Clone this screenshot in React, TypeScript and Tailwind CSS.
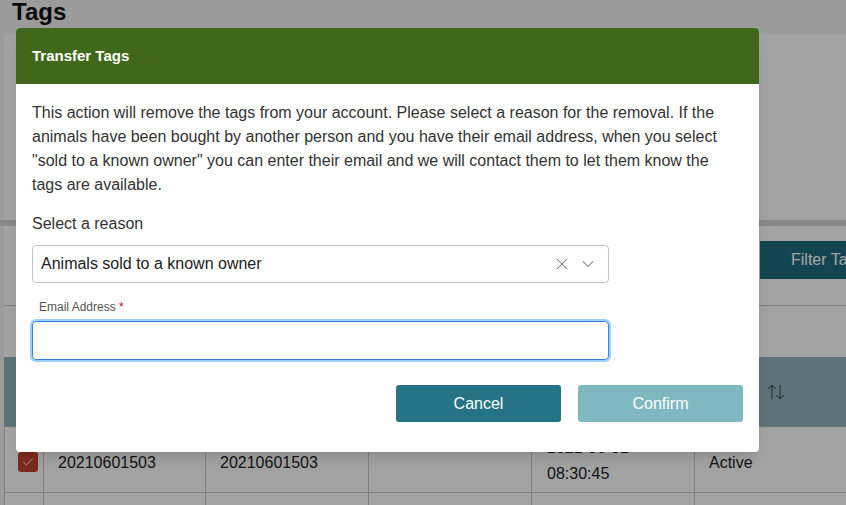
import React from 'react';
import { X, ChevronDown, Check, ArrowUpDown } from 'lucide-react';

const font = { fontFamily: '"Liberation Sans", Arial, sans-serif' };

function Background() {
  return (
    <div className="flex flex-col h-full bg-[#f2f2f2] text-[#222]">
      <h1 className="px-3 -mt-[3px] h-[37px] text-[24px] font-bold text-[#111] leading-[30px]">Tags</h1>
      <div className="ml-[4px] h-[186px] bg-white rounded-tl-[4px]" />
      <div className="h-[6px] bg-[#d6d6d6]" />
      <div className="ml-[4px] flex-1 bg-white flex flex-col">
        <div className="flex justify-end pt-[15px] h-[80px] border-b border-[#c8c8c8]">
          <button className="shrink-0 h-[38px] w-[120px] -mr-[34px] bg-[#1f6d7f] text-white text-[16px] font-medium text-left pl-[31px] whitespace-nowrap">
            Filter Tags
          </button>
        </div>
        <div className="h-[51px]" />
        <div className="h-[70px] bg-[#93b5bd] flex justify-end items-center pr-[60px] border-b border-[#b0b0b0]">
          <ArrowUpDown size={20} strokeWidth={1.5} className="text-[#555]" />
        </div>
        <div className="grid grid-cols-[40px_162px_163px_163px_163px_1fr] h-[66px] border-b border-[#c8c8c8] text-[16px] text-[#222]">
          <div className="border-l border-r border-[#c8c8c8] flex items-center justify-center pt-[4px] pl-[8px]">
            <span className="w-[20px] h-[20px] rounded-[3px] bg-[#c64230] flex items-center justify-center">
              <Check size={14} strokeWidth={1.5} className="text-white" />
            </span>
          </div>
          <div className="border-r border-[#c8c8c8] px-[14px] pt-[24px]">20210601503</div>
          <div className="border-r border-[#c8c8c8] px-[14px] pt-[24px]">20210601503</div>
          <div className="border-r border-[#c8c8c8]" />
          <div className="border-r border-[#c8c8c8] px-[15px] pt-[8px] leading-[26px]">
            <div>2021-06-01</div>
            <div>08:30:45</div>
          </div>
          <div className="px-[14px] pt-[24px]">Active</div>
        </div>
        <div className="grid grid-cols-[40px_162px_163px_163px_163px_1fr] flex-1">
          <div className="border-l border-r border-[#c8c8c8]" />
          <div className="border-r border-[#c8c8c8]" />
          <div className="border-r border-[#c8c8c8]" />
          <div className="border-r border-[#c8c8c8]" />
          <div className="border-r border-[#c8c8c8]" />
          <div />
        </div>
      </div>
    </div>
  );
}

function TransferModal() {
  return (
    <div className="absolute left-[16px] top-[28px] w-[743px] h-[424px] bg-white rounded-[4px] overflow-hidden shadow-lg flex flex-col">
      <div className="h-[56px] bg-[#41681a] flex items-center px-4">
        <span className="text-white text-[15px] font-bold">Transfer Tags</span>
      </div>
      <div className="flex flex-col px-4 pt-[17px] text-[#333]">
        <p className="text-[16px] leading-[24px] pr-[20px]">
          This action will remove the tags from your account. Please select a reason for the removal. If the animals have been bought by another person and you have their email address, when you select "sold to a known owner" you can enter their email and we will contact them to let them know the tags are available.
        </p>
        <label className="mt-[17px] text-[16px] leading-[20px]">Select a reason</label>
        <div className="mt-[11px] w-[577px] h-[38px] border border-[#c4c4c4] rounded-[4px] flex items-center pl-[8px] pr-[10px]">
          <span className="flex-1 text-[16px] text-[#222]">Animals sold to a known owner</span>
          <X size={20} strokeWidth={1.25} className="text-[#777]" />
          <ChevronDown size={20} strokeWidth={1.25} className="text-[#777] ml-[6px]" />
        </div>
        <label className="mt-[16px] pl-[7px] text-[12px] leading-[16px] text-[#555]">
          Email Address <span className="text-[#d0021b]">*</span>
        </label>
        <input className="mt-[6px] w-[577px] h-[39px] rounded-[4px] border border-[#3b82d6] ring-2 ring-[#9ccfff] outline-none px-2 text-[15px]" />
        <div className="flex justify-end gap-[17px] mt-[25px]">
          <button className="w-[165px] h-[37px] rounded-[3px] bg-[#257385] text-white text-[16px] font-medium">Cancel</button>
          <button className="w-[165px] h-[37px] rounded-[3px] bg-[#80b8c2] text-white text-[16px] font-medium">Confirm</button>
        </div>
      </div>
    </div>
  );
}

export default function App() {
  return (
    <div className="relative w-[846px] h-[505px] overflow-hidden" style={font}>
      <Background />
      <div className="absolute inset-0 bg-black/[0.36]" />
      <TransferModal />
    </div>
  );
}
